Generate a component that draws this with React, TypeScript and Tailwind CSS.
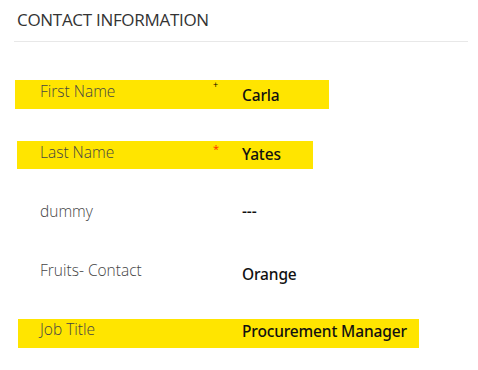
const rows = [
    { label: "First Name", value: "Carla", mark: "plus", ml: "ml-[15px]", w: "w-[314px]", h: "h-[29px]", mt: "mt-[38px]", pt: "pt-[1px]", pl: "pl-[25px]", lw: "w-[227px]", vt: "pt-[4px]", hl: true },
    { label: "Last Name", value: "Yates", mark: "star", ml: "ml-[17px]", w: "w-[296px]", h: "h-[28px]", mt: "mt-[32px]", pt: "pt-[1px]", pl: "pl-[23px]", lw: "w-[225px]", vt: "pt-[2px]", hl: true },
    { label: "dummy", value: "---", mark: "", ml: "ml-[17px]", w: "w-[296px]", h: "h-[28px]", mt: "mt-[31px]", pt: "pt-[1px]", pl: "pl-[23px]", lw: "w-[225px]", vt: "pt-[0px]", hl: false },
    { label: "Fruits- Contact", value: "Orange", mark: "", ml: "ml-[17px]", w: "w-[296px]", h: "h-[28px]", mt: "mt-[31px]", pt: "pt-[1px]", pl: "pl-[23px]", lw: "w-[225px]", vt: "pt-[4px]", hl: false },
    { label: "Job Title", value: "Procurement Manager", mark: "", ml: "ml-[18px]", w: "w-[401px]", h: "h-[29px]", mt: "mt-[32px]", pt: "pt-[-2px]", pl: "pl-[22px]", lw: "w-[224px]", vt: "pt-[1px]", hl: true },
];

const App: React.FC = () => {
    return (
        <div className="w-[478px] h-[370px] bg-white overflow-hidden" style={{ fontFamily: '"Open Sans", "Noto Sans", sans-serif' }}>
            <div className="pl-[17px] pt-[9px] h-[41px] text-[17px] leading-[22px] text-[#333333] tracking-[-0.3px]">CONTACT INFORMATION</div>
            <div className="ml-[14px] w-[454px] h-[1px] bg-[#e8e8e8]"></div>

            {rows.map((row) => (
                <div key={row.label} className={`flex ${row.mt} ${row.ml} ${row.w} ${row.h} ${row.hl ? "bg-[#ffe500]" : ""}`}>
                    {/* label kolom */}
                    <div className={`relative shrink-0 ${row.lw} ${row.pt}`}>
                        <span className={`block ${row.pl} text-[15.5px] leading-[20px] text-[#444444] font-light`}>{row.label}</span>
                        {row.mark === "plus" && <span className="absolute left-[198px] top-[0px] text-[9px] leading-[10px] text-black">+</span>}
                        {row.mark === "star" && <span className="absolute left-[196px] top-[3px] text-[11px] leading-[10px] text-[#ff2a00]">*</span>}
                    </div>
                    <div className={`${row.vt} text-[15.5px] leading-[22px] text-[#111111] font-medium font-['Noto_Sans',sans-serif] tracking-[-0.15px]`}>{row.value}</div>
                </div>
            ))}
        </div>
    );
};

export default App;
